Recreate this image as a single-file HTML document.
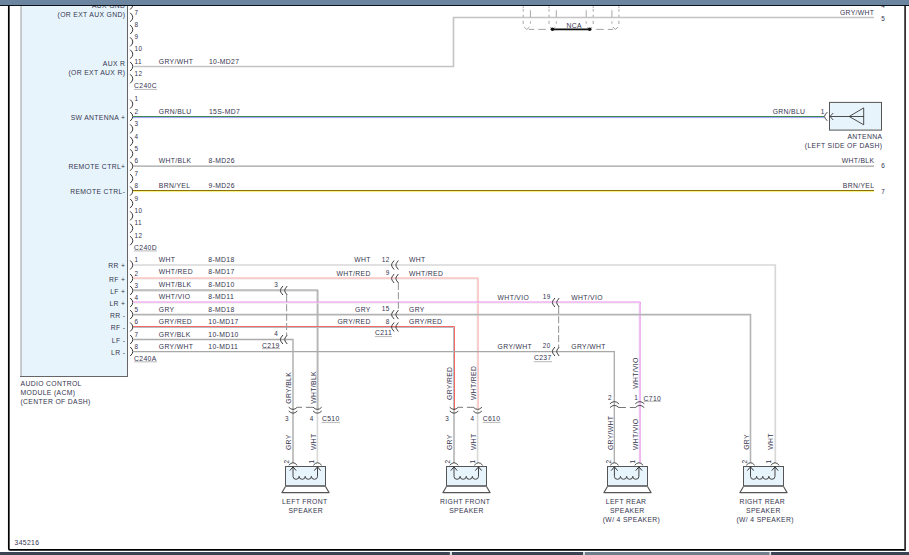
<!DOCTYPE html>
<html><head><meta charset="utf-8"><style>
html,body{margin:0;padding:0;background:#fff;width:909px;height:555px;overflow:hidden}
svg{display:block;position:absolute;left:0;top:0}
text{font-family:"Liberation Sans",sans-serif;fill:#34344e;letter-spacing:0.4px}
</style></head><body>
<svg width="909" height="555" viewBox="0 0 909 555">
<rect x="0" y="0" width="909" height="555" fill="#fff"/>
<rect x="21" y="-10" width="106.5" height="386.5" fill="#e8f4fc" stroke="none"/>
<line x1="21" y1="-10" x2="21" y2="376.5" stroke="#9a9a9a" stroke-width="1" />
<line x1="127.5" y1="-10" x2="127.5" y2="376.5" stroke="#666" stroke-width="1" />
<line x1="20" y1="376.5" x2="128" y2="376.5" stroke="#666" stroke-width="1" />
<path d="M130.2 0.5 L132.2 2.8 Q133.4 5.0 132.2 7.2 L130.2 9.5" stroke="#383838" stroke-width="1.0" fill="none" />
<text transform="translate(134.5 2.2) scale(0.873 1)" text-anchor="start" font-size="7.3" >6</text>
<path d="M130.2 12.799999999999997 L132.2 15.099999999999998 Q133.4 17.299999999999997 132.2 19.499999999999996 L130.2 21.799999999999997" stroke="#383838" stroke-width="1.0" fill="none" />
<text transform="translate(134.5 14.499999999999996) scale(0.873 1)" text-anchor="start" font-size="7.3" >7</text>
<path d="M130.2 25.099999999999994 L132.2 27.399999999999995 Q133.4 29.599999999999994 132.2 31.799999999999994 L130.2 34.099999999999994" stroke="#383838" stroke-width="1.0" fill="none" />
<text transform="translate(134.5 26.799999999999994) scale(0.873 1)" text-anchor="start" font-size="7.3" >8</text>
<path d="M130.2 37.4 L132.2 39.699999999999996 Q133.4 41.9 132.2 44.1 L130.2 46.4" stroke="#383838" stroke-width="1.0" fill="none" />
<text transform="translate(134.5 39.1) scale(0.873 1)" text-anchor="start" font-size="7.3" >9</text>
<path d="M130.2 49.7 L132.2 52.0 Q133.4 54.2 132.2 56.400000000000006 L130.2 58.7" stroke="#383838" stroke-width="1.0" fill="none" />
<text transform="translate(134.5 51.400000000000006) scale(0.873 1)" text-anchor="start" font-size="7.3" >10</text>
<path d="M130.2 62.0 L132.2 64.3 Q133.4 66.5 132.2 68.7 L130.2 71.0" stroke="#383838" stroke-width="1.0" fill="none" />
<text transform="translate(134.5 63.7) scale(0.873 1)" text-anchor="start" font-size="7.3" >11</text>
<path d="M130.2 74.3 L132.2 76.6 Q133.4 78.8 132.2 81.0 L130.2 83.3" stroke="#383838" stroke-width="1.0" fill="none" />
<text transform="translate(134.5 76.0) scale(0.873 1)" text-anchor="start" font-size="7.3" >12</text>
<path d="M130.2 99.58 L132.2 101.88 Q133.4 104.08 132.2 106.28 L130.2 108.58" stroke="#383838" stroke-width="1.0" fill="none" />
<text transform="translate(134.5 101.28) scale(0.873 1)" text-anchor="start" font-size="7.3" >1</text>
<path d="M130.2 112.0 L132.2 114.3 Q133.4 116.5 132.2 118.7 L130.2 121.0" stroke="#383838" stroke-width="1.0" fill="none" />
<text transform="translate(134.5 113.7) scale(0.873 1)" text-anchor="start" font-size="7.3" >2</text>
<path d="M130.2 124.41999999999999 L132.2 126.71999999999998 Q133.4 128.92 132.2 131.11999999999998 L130.2 133.42" stroke="#383838" stroke-width="1.0" fill="none" />
<text transform="translate(134.5 126.11999999999999) scale(0.873 1)" text-anchor="start" font-size="7.3" >3</text>
<path d="M130.2 136.84 L132.2 139.14000000000001 Q133.4 141.34 132.2 143.54 L130.2 145.84" stroke="#383838" stroke-width="1.0" fill="none" />
<text transform="translate(134.5 138.54) scale(0.873 1)" text-anchor="start" font-size="7.3" >4</text>
<path d="M130.2 149.26 L132.2 151.56 Q133.4 153.76 132.2 155.95999999999998 L130.2 158.26" stroke="#383838" stroke-width="1.0" fill="none" />
<text transform="translate(134.5 150.95999999999998) scale(0.873 1)" text-anchor="start" font-size="7.3" >5</text>
<path d="M130.2 161.68 L132.2 163.98000000000002 Q133.4 166.18 132.2 168.38 L130.2 170.68" stroke="#383838" stroke-width="1.0" fill="none" />
<text transform="translate(134.5 163.38) scale(0.873 1)" text-anchor="start" font-size="7.3" >6</text>
<path d="M130.2 174.1 L132.2 176.4 Q133.4 178.6 132.2 180.79999999999998 L130.2 183.1" stroke="#383838" stroke-width="1.0" fill="none" />
<text transform="translate(134.5 175.79999999999998) scale(0.873 1)" text-anchor="start" font-size="7.3" >7</text>
<path d="M130.2 186.51999999999998 L132.2 188.82 Q133.4 191.01999999999998 132.2 193.21999999999997 L130.2 195.51999999999998" stroke="#383838" stroke-width="1.0" fill="none" />
<text transform="translate(134.5 188.21999999999997) scale(0.873 1)" text-anchor="start" font-size="7.3" >8</text>
<path d="M130.2 198.94 L132.2 201.24 Q133.4 203.44 132.2 205.64 L130.2 207.94" stroke="#383838" stroke-width="1.0" fill="none" />
<text transform="translate(134.5 200.64) scale(0.873 1)" text-anchor="start" font-size="7.3" >9</text>
<path d="M130.2 211.36 L132.2 213.66000000000003 Q133.4 215.86 132.2 218.06 L130.2 220.36" stroke="#383838" stroke-width="1.0" fill="none" />
<text transform="translate(134.5 213.06) scale(0.873 1)" text-anchor="start" font-size="7.3" >10</text>
<path d="M130.2 223.78 L132.2 226.08 Q133.4 228.28 132.2 230.48 L130.2 232.78" stroke="#383838" stroke-width="1.0" fill="none" />
<text transform="translate(134.5 225.48) scale(0.873 1)" text-anchor="start" font-size="7.3" >11</text>
<path d="M130.2 236.2 L132.2 238.5 Q133.4 240.7 132.2 242.89999999999998 L130.2 245.2" stroke="#383838" stroke-width="1.0" fill="none" />
<text transform="translate(134.5 237.89999999999998) scale(0.873 1)" text-anchor="start" font-size="7.3" >12</text>
<path d="M130.2 260.5 L132.2 262.8 Q133.4 265 132.2 267.2 L130.2 269.5" stroke="#383838" stroke-width="1.0" fill="none" />
<text transform="translate(134.5 262.2) scale(0.873 1)" text-anchor="start" font-size="7.3" >1</text>
<path d="M130.2 274.0 L132.2 276.3 Q133.4 278.5 132.2 280.7 L130.2 283.0" stroke="#383838" stroke-width="1.0" fill="none" />
<text transform="translate(134.5 275.7) scale(0.873 1)" text-anchor="start" font-size="7.3" >2</text>
<path d="M130.2 286.0 L132.2 288.3 Q133.4 290.5 132.2 292.7 L130.2 295.0" stroke="#383838" stroke-width="1.0" fill="none" />
<text transform="translate(134.5 287.7) scale(0.873 1)" text-anchor="start" font-size="7.3" >3</text>
<path d="M130.2 298.0 L132.2 300.3 Q133.4 302.5 132.2 304.7 L130.2 307.0" stroke="#383838" stroke-width="1.0" fill="none" />
<text transform="translate(134.5 299.7) scale(0.873 1)" text-anchor="start" font-size="7.3" >4</text>
<path d="M130.2 310.1 L132.2 312.40000000000003 Q133.4 314.6 132.2 316.8 L130.2 319.1" stroke="#383838" stroke-width="1.0" fill="none" />
<text transform="translate(134.5 311.8) scale(0.873 1)" text-anchor="start" font-size="7.3" >5</text>
<path d="M130.2 322.5 L132.2 324.8 Q133.4 327 132.2 329.2 L130.2 331.5" stroke="#383838" stroke-width="1.0" fill="none" />
<text transform="translate(134.5 324.2) scale(0.873 1)" text-anchor="start" font-size="7.3" >6</text>
<path d="M130.2 335.0 L132.2 337.3 Q133.4 339.5 132.2 341.7 L130.2 344.0" stroke="#383838" stroke-width="1.0" fill="none" />
<text transform="translate(134.5 336.7) scale(0.873 1)" text-anchor="start" font-size="7.3" >7</text>
<path d="M130.2 347.0 L132.2 349.3 Q133.4 351.5 132.2 353.7 L130.2 356.0" stroke="#383838" stroke-width="1.0" fill="none" />
<text transform="translate(134.5 348.7) scale(0.873 1)" text-anchor="start" font-size="7.3" >8</text>
<text transform="translate(134 88.4) scale(0.873 1)" text-anchor="start" font-size="7.8" >C240C</text>
<line x1="134" y1="89.4" x2="157" y2="89.4" stroke="#9a9a9a" stroke-width="0.7" />
<text transform="translate(134 249.9) scale(0.873 1)" text-anchor="start" font-size="7.8" >C240D</text>
<line x1="134" y1="250.9" x2="157" y2="250.9" stroke="#9a9a9a" stroke-width="0.7" />
<text transform="translate(134 360.7) scale(0.873 1)" text-anchor="start" font-size="7.8" >C240A</text>
<line x1="134" y1="361.8" x2="157" y2="361.8" stroke="#9a9a9a" stroke-width="0.7" />
<text transform="translate(125.35 7.9) scale(0.873 1)" text-anchor="end" font-size="7.8" >AUX GND</text>
<text transform="translate(125.35 16.5) scale(0.873 1)" text-anchor="end" font-size="7.8" >(OR EXT AUX GND)</text>
<text transform="translate(125.35 66.0) scale(0.873 1)" text-anchor="end" font-size="7.8" >AUX R</text>
<text transform="translate(125.35 75.2) scale(0.873 1)" text-anchor="end" font-size="7.8" >(OR EXT AUX R)</text>
<text transform="translate(125.35 120.2) scale(0.873 1)" text-anchor="end" font-size="7.8" >SW ANTENNA +</text>
<text transform="translate(125.35 169.4) scale(0.873 1)" text-anchor="end" font-size="7.8" >REMOTE CTRL+</text>
<text transform="translate(125.35 194.0) scale(0.873 1)" text-anchor="end" font-size="7.8" >REMOTE CTRL-</text>
<text transform="translate(125.35 268.3) scale(0.873 1)" text-anchor="end" font-size="7.8" >RR +</text>
<text transform="translate(125.35 281.8) scale(0.873 1)" text-anchor="end" font-size="7.8" >RF +</text>
<text transform="translate(125.35 293.8) scale(0.873 1)" text-anchor="end" font-size="7.8" >LF +</text>
<text transform="translate(125.35 305.8) scale(0.873 1)" text-anchor="end" font-size="7.8" >LR +</text>
<text transform="translate(125.35 317.90000000000003) scale(0.873 1)" text-anchor="end" font-size="7.8" >RR -</text>
<text transform="translate(125.35 330.3) scale(0.873 1)" text-anchor="end" font-size="7.8" >RF -</text>
<text transform="translate(125.35 342.8) scale(0.873 1)" text-anchor="end" font-size="7.8" >LF -</text>
<text transform="translate(125.35 354.8) scale(0.873 1)" text-anchor="end" font-size="7.8" >LR -</text>
<text transform="translate(20.5 386.3) scale(0.873 1)" text-anchor="start" font-size="7.8" >AUDIO CONTROL</text>
<text transform="translate(20.5 395.2) scale(0.873 1)" text-anchor="start" font-size="7.8" >MODULE (ACM)</text>
<text transform="translate(20.5 404.1) scale(0.873 1)" text-anchor="start" font-size="7.8" >(CENTER OF DASH)</text>
<text transform="translate(14.5 545.2) scale(0.873 1)" text-anchor="start" font-size="7.8" >345216</text>
<path d="M133 66.5 H453.5 V17.5 H874" stroke="#c4c4c4" stroke-width="1.6" fill="none"/>
<text transform="translate(158.8 63.6) scale(0.873 1)" text-anchor="start" font-size="7.8" >GRY/WHT</text>
<text transform="translate(208.9 63.6) scale(0.873 1)" text-anchor="start" font-size="7.8" >10-MD27</text>
<text transform="translate(874.35 14.6) scale(0.873 1)" text-anchor="end" font-size="7.8" >GRY/WHT</text>
<text transform="translate(881.3 21.0) scale(0.873 1)" text-anchor="start" font-size="7.3" >5</text>
<text transform="translate(881.3 7.7) scale(0.873 1)" text-anchor="start" font-size="7.3" >4</text>
<line x1="133" y1="116.5" x2="824" y2="116.5" stroke="#3a8a52" stroke-width="1.2" />
<line x1="133" y1="117.6" x2="824" y2="117.6" stroke="#9d9df2" stroke-width="1.0" />
<text transform="translate(158.8 113.6) scale(0.873 1)" text-anchor="start" font-size="7.8" >GRN/BLU</text>
<text transform="translate(208.9 113.6) scale(0.873 1)" text-anchor="start" font-size="7.8" >15S-MD7</text>
<text transform="translate(772.7 113.6) scale(0.873 1)" text-anchor="start" font-size="7.8" >GRN/BLU</text>
<text transform="translate(820.8 113.8) scale(0.873 1)" text-anchor="start" font-size="7.3" >1</text>
<path d="M827.4 112.1 L825 114.9 Q824.2 116.5 825 118.1 L827.4 120.9" stroke="#383838" stroke-width="0.9" fill="none" />
<rect x="829.5" y="102.4" width="52" height="27.7" fill="#e8f4fc" stroke="#555" stroke-width="1"/>
<line x1="830" y1="116.5" x2="864" y2="116.5" stroke="#3a3a3a" stroke-width="0.9" />
<path d="M833.2 113.0 L830.0 116.5 L833.2 120.0" stroke="#3a3a3a" stroke-width="0.9" fill="none" />
<path d="M863.7 107.9 L849.2 116.5 L863.7 124.8 Z" stroke="#3a3a3a" stroke-width="0.9" fill="none" />
<text transform="translate(882.35 139.2) scale(0.873 1)" text-anchor="end" font-size="7.8" >ANTENNA</text>
<text transform="translate(882.35 148.3) scale(0.873 1)" text-anchor="end" font-size="7.8" >(LEFT SIDE OF DASH)</text>
<line x1="133" y1="166.2" x2="874" y2="166.2" stroke="#a2a2a2" stroke-width="1.3" />
<text transform="translate(158.8 163.3) scale(0.873 1)" text-anchor="start" font-size="7.8" >WHT/BLK</text>
<text transform="translate(208.5 163.3) scale(0.873 1)" text-anchor="start" font-size="7.8" >8-MD26</text>
<text transform="translate(874.35 163.0) scale(0.873 1)" text-anchor="end" font-size="7.8" >WHT/BLK</text>
<text transform="translate(881.3 168.4) scale(0.873 1)" text-anchor="start" font-size="7.3" >6</text>
<line x1="133" y1="190.5" x2="874" y2="190.5" stroke="#8a7010" stroke-width="1.2" />
<line x1="133" y1="191.6" x2="874" y2="191.6" stroke="#f8f070" stroke-width="1.0" />
<text transform="translate(158.8 188.0) scale(0.873 1)" text-anchor="start" font-size="7.8" >BRN/YEL</text>
<text transform="translate(208.5 188.0) scale(0.873 1)" text-anchor="start" font-size="7.8" >9-MD26</text>
<text transform="translate(874.35 188.0) scale(0.873 1)" text-anchor="end" font-size="7.8" >BRN/YEL</text>
<text transform="translate(881.3 194.0) scale(0.873 1)" text-anchor="start" font-size="7.3" >7</text>
<path d="M133 265 H775.3 V463" stroke="#d8d8d8" stroke-width="1.7" fill="none"/>
<path d="M133 279.0 H477.1 V410.5" stroke="#e6e6e6" stroke-width="1.0" fill="none"/>
<path d="M133 278.0 H478.1 V410.5" stroke="#ffa4a4" stroke-width="1.0" fill="none"/>
<path d="M477.6 410.5 V463" stroke="#d8d8d8" stroke-width="1.6" fill="none"/>
<path d="M133 291.0 H316.9 V410.5" stroke="#d2d2d2" stroke-width="1.0" fill="none"/>
<path d="M133 290.0 H317.9 V410.5" stroke="#959595" stroke-width="1.0" fill="none"/>
<path d="M317.4 410.5 V463" stroke="#d8d8d8" stroke-width="1.6" fill="none"/>
<path d="M133 303.0 H639.3 V463" stroke="#e6e9e6" stroke-width="1.0" fill="none"/>
<path d="M133 302.0 H640.3 V463" stroke="#f08cf0" stroke-width="1.0" fill="none"/>
<path d="M639.8 303.5 V463" stroke="#efbff3" stroke-width="1.9" fill="none"/>
<path d="M133 314.6 H750.5 V463" stroke="#b4b4b4" stroke-width="1.6" fill="none"/>
<path d="M133 327.5 H453.5 V410.5" stroke="#b8bcbc" stroke-width="1.0" fill="none"/>
<path d="M133 326.5 H454.5 V410.5" stroke="#f46868" stroke-width="1.0" fill="none"/>
<path d="M454.0 410.5 V463" stroke="#b4b4b4" stroke-width="1.6" fill="none"/>
<path d="M133 339.5 H293.0 V410.5" stroke="#acacac" stroke-width="1.4" fill="none"/>
<path d="M293.0 410.5 V463" stroke="#b4b4b4" stroke-width="1.6" fill="none"/>
<path d="M133 351.6 H614.3 V463" stroke="#a8a8a8" stroke-width="1.25" fill="none"/>
<text transform="translate(158.8 262.0) scale(0.873 1)" text-anchor="start" font-size="7.8" >WHT</text>
<text transform="translate(208.3 262.0) scale(0.873 1)" text-anchor="start" font-size="7.8" >8-MD18</text>
<text transform="translate(158.8 274.45) scale(0.873 1)" text-anchor="start" font-size="7.8" >WHT/RED</text>
<text transform="translate(208.3 274.45) scale(0.873 1)" text-anchor="start" font-size="7.8" >8-MD17</text>
<text transform="translate(158.8 286.9) scale(0.873 1)" text-anchor="start" font-size="7.8" >WHT/BLK</text>
<text transform="translate(208.3 286.9) scale(0.873 1)" text-anchor="start" font-size="7.8" >8-MD10</text>
<text transform="translate(158.8 299.35) scale(0.873 1)" text-anchor="start" font-size="7.8" >WHT/VIO</text>
<text transform="translate(208.3 299.35) scale(0.873 1)" text-anchor="start" font-size="7.8" >8-MD11</text>
<text transform="translate(158.8 311.8) scale(0.873 1)" text-anchor="start" font-size="7.8" >GRY</text>
<text transform="translate(208.3 311.8) scale(0.873 1)" text-anchor="start" font-size="7.8" >8-MD18</text>
<text transform="translate(158.8 324.25) scale(0.873 1)" text-anchor="start" font-size="7.8" >GRY/RED</text>
<text transform="translate(208.3 324.25) scale(0.873 1)" text-anchor="start" font-size="7.8" >10-MD17</text>
<text transform="translate(158.8 336.7) scale(0.873 1)" text-anchor="start" font-size="7.8" >GRY/BLK</text>
<text transform="translate(208.3 336.7) scale(0.873 1)" text-anchor="start" font-size="7.8" >10-MD10</text>
<text transform="translate(158.8 349.15) scale(0.873 1)" text-anchor="start" font-size="7.8" >GRY/WHT</text>
<text transform="translate(208.3 349.15) scale(0.873 1)" text-anchor="start" font-size="7.8" >10-MD11</text>
<path d="M394.09999999999997 260.5 L391.99999999999994 263.4 Q391.2 265 391.99999999999994 266.6 L394.09999999999997 269.5" stroke="#383838" stroke-width="0.95" fill="none" />
<path d="M398.4 260.5 L396.29999999999995 263.4 Q395.5 265 396.29999999999995 266.6 L398.4 269.5" stroke="#383838" stroke-width="0.95" fill="none" />
<path d="M394.09999999999997 274.0 L391.99999999999994 276.9 Q391.2 278.5 391.99999999999994 280.1 L394.09999999999997 283.0" stroke="#383838" stroke-width="0.95" fill="none" />
<path d="M398.4 274.0 L396.29999999999995 276.9 Q395.5 278.5 396.29999999999995 280.1 L398.4 283.0" stroke="#383838" stroke-width="0.95" fill="none" />
<path d="M394.09999999999997 310.1 L391.99999999999994 313.0 Q391.2 314.6 391.99999999999994 316.20000000000005 L394.09999999999997 319.1" stroke="#383838" stroke-width="0.95" fill="none" />
<path d="M398.4 310.1 L396.29999999999995 313.0 Q395.5 314.6 396.29999999999995 316.20000000000005 L398.4 319.1" stroke="#383838" stroke-width="0.95" fill="none" />
<path d="M394.09999999999997 322.5 L391.99999999999994 325.4 Q391.2 327 391.99999999999994 328.6 L394.09999999999997 331.5" stroke="#383838" stroke-width="0.95" fill="none" />
<path d="M398.4 322.5 L396.29999999999995 325.4 Q395.5 327 396.29999999999995 328.6 L398.4 331.5" stroke="#383838" stroke-width="0.95" fill="none" />
<line x1="398.4" y1="282.9" x2="398.4" y2="310.20000000000005" stroke="#9c9c9c" stroke-width="1.1" stroke-dasharray="7 2.4"/>
<text transform="translate(370.75 262.2) scale(0.873 1)" text-anchor="end" font-size="7.8" >WHT</text>
<text transform="translate(389.55 261.6) scale(0.873 1)" text-anchor="end" font-size="7.3" >12</text>
<text transform="translate(409 262.2) scale(0.873 1)" text-anchor="start" font-size="7.8" >WHT</text>
<text transform="translate(370.75 275.7) scale(0.873 1)" text-anchor="end" font-size="7.8" >WHT/RED</text>
<text transform="translate(389.55 275.1) scale(0.873 1)" text-anchor="end" font-size="7.3" >9</text>
<text transform="translate(409 275.7) scale(0.873 1)" text-anchor="start" font-size="7.8" >WHT/RED</text>
<text transform="translate(370.75 311.8) scale(0.873 1)" text-anchor="end" font-size="7.8" >GRY</text>
<text transform="translate(389.55 311.20000000000005) scale(0.873 1)" text-anchor="end" font-size="7.3" >15</text>
<text transform="translate(409 311.8) scale(0.873 1)" text-anchor="start" font-size="7.8" >GRY</text>
<text transform="translate(370.75 324.2) scale(0.873 1)" text-anchor="end" font-size="7.8" >GRY/RED</text>
<text transform="translate(389.55 323.6) scale(0.873 1)" text-anchor="end" font-size="7.3" >8</text>
<text transform="translate(409 324.2) scale(0.873 1)" text-anchor="start" font-size="7.8" >GRY/RED</text>
<text transform="translate(374.9 335.2) scale(0.873 1)" text-anchor="start" font-size="7.8" >C211</text>
<line x1="374.9" y1="336.6" x2="392" y2="336.6" stroke="#9a9a9a" stroke-width="0.7" />
<path d="M282.9 286.0 L280.79999999999995 288.9 Q280.0 290.5 280.79999999999995 292.1 L282.9 295.0" stroke="#383838" stroke-width="0.95" fill="none" />
<path d="M287.2 286.0 L285.09999999999997 288.9 Q284.3 290.5 285.09999999999997 292.1 L287.2 295.0" stroke="#383838" stroke-width="0.95" fill="none" />
<path d="M282.9 335.0 L280.79999999999995 337.9 Q280.0 339.5 280.79999999999995 341.1 L282.9 344.0" stroke="#383838" stroke-width="0.95" fill="none" />
<path d="M287.2 335.0 L285.09999999999997 337.9 Q284.3 339.5 285.09999999999997 341.1 L287.2 344.0" stroke="#383838" stroke-width="0.95" fill="none" />
<line x1="286.6" y1="294.9" x2="286.6" y2="335.1" stroke="#9c9c9c" stroke-width="1.1" stroke-dasharray="7 2.4"/>
<text transform="translate(278.05 286.7) scale(0.873 1)" text-anchor="end" font-size="7.3" >3</text>
<text transform="translate(278.05 335.7) scale(0.873 1)" text-anchor="end" font-size="7.3" >4</text>
<text transform="translate(262 347.8) scale(0.873 1)" text-anchor="start" font-size="7.8" >C219</text>
<line x1="262" y1="348.6" x2="280" y2="348.6" stroke="#9a9a9a" stroke-width="0.7" />
<path d="M554.9000000000001 298.0 L552.8000000000001 300.9 Q552.0000000000001 302.5 552.8000000000001 304.1 L554.9000000000001 307.0" stroke="#383838" stroke-width="0.95" fill="none" />
<path d="M559.2 298.0 L557.1 300.9 Q556.3000000000001 302.5 557.1 304.1 L559.2 307.0" stroke="#383838" stroke-width="0.95" fill="none" />
<path d="M554.9000000000001 347.0 L552.8000000000001 349.9 Q552.0000000000001 351.5 552.8000000000001 353.1 L554.9000000000001 356.0" stroke="#383838" stroke-width="0.95" fill="none" />
<path d="M559.2 347.0 L557.1 349.9 Q556.3000000000001 351.5 557.1 353.1 L559.2 356.0" stroke="#383838" stroke-width="0.95" fill="none" />
<line x1="558.6" y1="306.9" x2="558.6" y2="347.1" stroke="#9c9c9c" stroke-width="1.1" stroke-dasharray="7 2.4"/>
<text transform="translate(497.6 299.7) scale(0.873 1)" text-anchor="start" font-size="7.8" >WHT/VIO</text>
<text transform="translate(550.55 299.3) scale(0.873 1)" text-anchor="end" font-size="7.3" >19</text>
<text transform="translate(571.3 299.7) scale(0.873 1)" text-anchor="start" font-size="7.8" >WHT/VIO</text>
<text transform="translate(497.6 348.7) scale(0.873 1)" text-anchor="start" font-size="7.8" >GRY/WHT</text>
<text transform="translate(550.55 348.3) scale(0.873 1)" text-anchor="end" font-size="7.3" >20</text>
<text transform="translate(571.3 348.7) scale(0.873 1)" text-anchor="start" font-size="7.8" >GRY/WHT</text>
<text transform="translate(533.9 360.3) scale(0.873 1)" text-anchor="start" font-size="7.8" >C237</text>
<line x1="533.9" y1="361.7" x2="552" y2="361.7" stroke="#9a9a9a" stroke-width="0.7" />
<path d="M288.7 407.2 Q293.0 411.59999999999997 297.3 407.2" stroke="#383838" stroke-width="0.9" fill="none" />
<path d="M288.7 411.0 Q293.0 415.4 297.3 411.0" stroke="#383838" stroke-width="0.9" fill="none" />
<path d="M313.09999999999997 407.2 Q317.4 411.59999999999997 321.7 407.2" stroke="#383838" stroke-width="0.9" fill="none" />
<path d="M313.09999999999997 411.0 Q317.4 415.4 321.7 411.0" stroke="#383838" stroke-width="0.9" fill="none" />
<line x1="297.3" y1="407.3" x2="313.09999999999997" y2="407.3" stroke="#666" stroke-width="0.9" stroke-dasharray="4.7 3.9 9"/>
<text transform="translate(285 420.6) scale(0.873 1)" text-anchor="start" font-size="7.3" >3</text>
<text transform="translate(309.7 420.6) scale(0.873 1)" text-anchor="start" font-size="7.3" >4</text>
<text transform="translate(321.9 421.0) scale(0.873 1)" text-anchor="start" font-size="7.8" >C510</text>
<line x1="321.9" y1="422.4" x2="340" y2="422.4" stroke="#9a9a9a" stroke-width="0.7" />
<path d="M449.7 407.2 Q454.0 411.59999999999997 458.3 407.2" stroke="#383838" stroke-width="0.9" fill="none" />
<path d="M449.7 411.0 Q454.0 415.4 458.3 411.0" stroke="#383838" stroke-width="0.9" fill="none" />
<path d="M473.3 407.2 Q477.6 411.59999999999997 481.90000000000003 407.2" stroke="#383838" stroke-width="0.9" fill="none" />
<path d="M473.3 411.0 Q477.6 415.4 481.90000000000003 411.0" stroke="#383838" stroke-width="0.9" fill="none" />
<line x1="458.3" y1="407.3" x2="473.3" y2="407.3" stroke="#666" stroke-width="0.9" stroke-dasharray="4.7 3.9 9"/>
<text transform="translate(445.3 420.6) scale(0.873 1)" text-anchor="start" font-size="7.3" >3</text>
<text transform="translate(470.5 420.6) scale(0.873 1)" text-anchor="start" font-size="7.3" >4</text>
<text transform="translate(482.7 421.0) scale(0.873 1)" text-anchor="start" font-size="7.8" >C610</text>
<line x1="482.7" y1="422.4" x2="500.5" y2="422.4" stroke="#9a9a9a" stroke-width="0.7" />
<path d="M609.9 403.8 Q614.4 399.40000000000003 618.9 403.8" stroke="#383838" stroke-width="0.9" fill="none" />
<path d="M609.9 407.6 Q614.4 403.2 618.9 407.6" stroke="#383838" stroke-width="0.9" fill="none" />
<path d="M635.3 403.8 Q639.8 399.40000000000003 644.3 403.8" stroke="#383838" stroke-width="0.9" fill="none" />
<path d="M635.3 407.6 Q639.8 403.2 644.3 407.6" stroke="#383838" stroke-width="0.9" fill="none" />
<line x1="618.9" y1="407.5" x2="635.3" y2="407.5" stroke="#666" stroke-width="0.9" stroke-dasharray="7 4 9"/>
<text transform="translate(607.9 399.8) scale(0.873 1)" text-anchor="start" font-size="7.3" >2</text>
<text transform="translate(634.3 399.8) scale(0.873 1)" text-anchor="start" font-size="7.3" >1</text>
<text transform="translate(643.6 400.6) scale(0.873 1)" text-anchor="start" font-size="7.8" >C710</text>
<line x1="643.6" y1="401.3" x2="661" y2="401.3" stroke="#9a9a9a" stroke-width="0.7" />
<text x="0" y="0" font-size="7.8" transform="translate(291.0 403.7) rotate(-90) scale(0.873 1)">GRY/BLK</text>
<text x="0" y="0" font-size="7.8" transform="translate(315.5 403.7) rotate(-90) scale(0.873 1)">WHT/BLK</text>
<text x="0" y="0" font-size="7.8" transform="translate(291.0 450.1) rotate(-90) scale(0.873 1)">GRY</text>
<text x="0" y="0" font-size="7.8" transform="translate(315.5 450.1) rotate(-90) scale(0.873 1)">WHT</text>
<text x="0" y="0" font-size="7.8" transform="translate(452.0 400.0) rotate(-90) scale(0.873 1)">GRY/RED</text>
<text x="0" y="0" font-size="7.8" transform="translate(475.9 400.0) rotate(-90) scale(0.873 1)">WHT/RED</text>
<text x="0" y="0" font-size="7.8" transform="translate(452.0 450.1) rotate(-90) scale(0.873 1)">GRY</text>
<text x="0" y="0" font-size="7.8" transform="translate(475.9 450.1) rotate(-90) scale(0.873 1)">WHT</text>
<text x="0" y="0" font-size="7.8" transform="translate(637.8 388.8) rotate(-90) scale(0.873 1)">WHT/VIO</text>
<text x="0" y="0" font-size="7.8" transform="translate(612.6 450.1) rotate(-90) scale(0.873 1)">GRY/WHT</text>
<text x="0" y="0" font-size="7.8" transform="translate(637.8 450.1) rotate(-90) scale(0.873 1)">WHT/VIO</text>
<text x="0" y="0" font-size="7.8" transform="translate(748.8 449.8) rotate(-90) scale(0.873 1)">GRY</text>
<text x="0" y="0" font-size="7.8" transform="translate(773.4 449.8) rotate(-90) scale(0.873 1)">WHT</text>
<path d="M288.8 465.3 Q293.0 460.2 297.2 465.3" stroke="#383838" stroke-width="0.9" fill="none" />
<path d="M313.3 465.3 Q317.5 460.2 321.7 465.3" stroke="#383838" stroke-width="0.9" fill="none" />
<rect x="285.5" y="466.5" width="40" height="19.5" fill="#e8f4fc" stroke="#555" stroke-width="1"/>
<line x1="285.5" y1="486" x2="325.5" y2="486" stroke="#6a6a6a" stroke-width="1.6" />
<path d="M285.5 486.5 L281.9 492.6 L329.1 492.6 L325.5 486.5" stroke="#555" stroke-width="1.1" fill="none" stroke-linejoin="round"/>
<path d="M293.0 466.8 V476.3 A3.0625 3.0 0 0 0 299.125 476.3 A3.0625 3.0 0 0 0 305.25 476.3 A3.0625 3.0 0 0 0 311.375 476.3 A3.0625 3.0 0 0 0 317.5 476.3 V466.8" stroke="#444" stroke-width="1.0" fill="none" />
<path d="M289.8 470.6 L293.0 466.9 L296.2 470.6" stroke="#333" stroke-width="1.0" fill="none" />
<path d="M314.3 470.6 L317.5 466.9 L320.7 470.6" stroke="#333" stroke-width="1.0" fill="none" />
<text x="0" y="0" font-size="7.3" transform="translate(289.09999999999997 463.5) rotate(-90) scale(0.873 1)">2</text>
<text x="0" y="0" font-size="7.3" transform="translate(313.59999999999997 463.5) rotate(-90) scale(0.873 1)">1</text>
<text transform="translate(304.77 504.3) scale(0.873 1)" text-anchor="middle" font-size="7.8" >LEFT FRONT</text>
<text transform="translate(305.77 513.2) scale(0.873 1)" text-anchor="middle" font-size="7.8" >SPEAKER</text>
<path d="M449.8 465.3 Q454.0 460.2 458.2 465.3" stroke="#383838" stroke-width="0.9" fill="none" />
<path d="M474.3 465.3 Q478.5 460.2 482.7 465.3" stroke="#383838" stroke-width="0.9" fill="none" />
<rect x="446.5" y="466.5" width="40" height="19.5" fill="#e8f4fc" stroke="#555" stroke-width="1"/>
<line x1="446.5" y1="486" x2="486.5" y2="486" stroke="#6a6a6a" stroke-width="1.6" />
<path d="M446.5 486.5 L442.9 492.6 L490.1 492.6 L486.5 486.5" stroke="#555" stroke-width="1.1" fill="none" stroke-linejoin="round"/>
<path d="M454.0 466.8 V476.3 A3.0625 3.0 0 0 0 460.125 476.3 A3.0625 3.0 0 0 0 466.25 476.3 A3.0625 3.0 0 0 0 472.375 476.3 A3.0625 3.0 0 0 0 478.5 476.3 V466.8" stroke="#444" stroke-width="1.0" fill="none" />
<path d="M450.8 470.6 L454.0 466.9 L457.2 470.6" stroke="#333" stroke-width="1.0" fill="none" />
<path d="M475.3 470.6 L478.5 466.9 L481.7 470.6" stroke="#333" stroke-width="1.0" fill="none" />
<text x="0" y="0" font-size="7.3" transform="translate(450.09999999999997 463.5) rotate(-90) scale(0.873 1)">2</text>
<text x="0" y="0" font-size="7.3" transform="translate(474.59999999999997 463.5) rotate(-90) scale(0.873 1)">1</text>
<text transform="translate(465.17 504.3) scale(0.873 1)" text-anchor="middle" font-size="7.8" >RIGHT FRONT</text>
<text transform="translate(466.47 513.2) scale(0.873 1)" text-anchor="middle" font-size="7.8" >SPEAKER</text>
<path d="M610.1999999999999 465.3 Q614.4 460.2 618.6 465.3" stroke="#383838" stroke-width="0.9" fill="none" />
<path d="M634.6999999999999 465.3 Q638.9 460.2 643.1 465.3" stroke="#383838" stroke-width="0.9" fill="none" />
<rect x="607.5" y="466.5" width="40" height="19.5" fill="#e8f4fc" stroke="#555" stroke-width="1"/>
<line x1="607.5" y1="486" x2="647.5" y2="486" stroke="#6a6a6a" stroke-width="1.6" />
<path d="M607.5 486.5 L603.9 492.6 L651.1 492.6 L647.5 486.5" stroke="#555" stroke-width="1.1" fill="none" stroke-linejoin="round"/>
<path d="M614.4 466.8 V476.3 A3.0625 3.0 0 0 0 620.525 476.3 A3.0625 3.0 0 0 0 626.65 476.3 A3.0625 3.0 0 0 0 632.775 476.3 A3.0625 3.0 0 0 0 638.9 476.3 V466.8" stroke="#444" stroke-width="1.0" fill="none" />
<path d="M611.1999999999999 470.6 L614.4 466.9 L617.6 470.6" stroke="#333" stroke-width="1.0" fill="none" />
<path d="M635.6999999999999 470.6 L638.9 466.9 L642.1 470.6" stroke="#333" stroke-width="1.0" fill="none" />
<text x="0" y="0" font-size="7.3" transform="translate(610.5 463.5) rotate(-90) scale(0.873 1)">2</text>
<text x="0" y="0" font-size="7.3" transform="translate(635.0 463.5) rotate(-90) scale(0.873 1)">1</text>
<text transform="translate(626.07 504.3) scale(0.873 1)" text-anchor="middle" font-size="7.8" >LEFT REAR</text>
<text transform="translate(627.27 513.2) scale(0.873 1)" text-anchor="middle" font-size="7.8" >SPEAKER</text>
<text transform="translate(631.47 522.3) scale(0.873 1)" text-anchor="middle" font-size="7.8" >(W/ 4 SPEAKER)</text>
<path d="M746.3 465.3 Q750.5 460.2 754.7 465.3" stroke="#383838" stroke-width="0.9" fill="none" />
<path d="M770.8 465.3 Q775.0 460.2 779.2 465.3" stroke="#383838" stroke-width="0.9" fill="none" />
<rect x="743.5" y="466.5" width="40" height="19.5" fill="#e8f4fc" stroke="#555" stroke-width="1"/>
<line x1="743.5" y1="486" x2="783.5" y2="486" stroke="#6a6a6a" stroke-width="1.6" />
<path d="M743.5 486.5 L739.9 492.6 L787.1 492.6 L783.5 486.5" stroke="#555" stroke-width="1.1" fill="none" stroke-linejoin="round"/>
<path d="M750.5 466.8 V476.3 A3.0625 3.0 0 0 0 756.625 476.3 A3.0625 3.0 0 0 0 762.75 476.3 A3.0625 3.0 0 0 0 768.875 476.3 A3.0625 3.0 0 0 0 775.0 476.3 V466.8" stroke="#444" stroke-width="1.0" fill="none" />
<path d="M747.3 470.6 L750.5 466.9 L753.7 470.6" stroke="#333" stroke-width="1.0" fill="none" />
<path d="M771.8 470.6 L775.0 466.9 L778.2 470.6" stroke="#333" stroke-width="1.0" fill="none" />
<text x="0" y="0" font-size="7.3" transform="translate(746.6 463.5) rotate(-90) scale(0.873 1)">2</text>
<text x="0" y="0" font-size="7.3" transform="translate(771.1 463.5) rotate(-90) scale(0.873 1)">1</text>
<text transform="translate(762.27 504.3) scale(0.873 1)" text-anchor="middle" font-size="7.8" >RIGHT REAR</text>
<text transform="translate(763.37 513.2) scale(0.873 1)" text-anchor="middle" font-size="7.8" >SPEAKER</text>
<text transform="translate(765.17 522.3) scale(0.873 1)" text-anchor="middle" font-size="7.8" >(W/ 4 SPEAKER)</text>
<line x1="523.2" y1="6.2" x2="523.2" y2="8.0" stroke="#a8a8a8" stroke-width="1.0" />
<line x1="523.2" y1="8.9" x2="523.2" y2="11.6" stroke="#a8a8a8" stroke-width="1.0" />
<line x1="523.2" y1="14.8" x2="523.2" y2="17.0" stroke="#a8a8a8" stroke-width="1.0" />
<line x1="523.2" y1="20.8" x2="523.2" y2="24.0" stroke="#a8a8a8" stroke-width="1.0" />
<line x1="530.4" y1="10.2" x2="530.4" y2="17.2" stroke="#a8a8a8" stroke-width="1.0" />
<line x1="530.4" y1="21.3" x2="530.4" y2="23.7" stroke="#a8a8a8" stroke-width="1.0" />
<path d="M524.2 27.0 L526.8 29.5 L529.4 27.0" stroke="#999" stroke-width="0.9" fill="none" />
<line x1="549.0" y1="6.2" x2="549.0" y2="8.0" stroke="#a8a8a8" stroke-width="1.0" />
<line x1="549.0" y1="8.9" x2="549.0" y2="11.6" stroke="#a8a8a8" stroke-width="1.0" />
<line x1="549.0" y1="14.8" x2="549.0" y2="17.0" stroke="#a8a8a8" stroke-width="1.0" />
<line x1="549.0" y1="20.8" x2="549.0" y2="24.0" stroke="#a8a8a8" stroke-width="1.0" />
<line x1="556.3" y1="10.2" x2="556.3" y2="17.2" stroke="#a8a8a8" stroke-width="1.0" />
<line x1="556.3" y1="21.3" x2="556.3" y2="23.7" stroke="#a8a8a8" stroke-width="1.0" />
<path d="M550.0 27.0 L552.65 29.5 L555.3 27.0" stroke="#999" stroke-width="0.9" fill="none" />
<line x1="593.2" y1="6.2" x2="593.2" y2="8.0" stroke="#a8a8a8" stroke-width="1.0" />
<line x1="593.2" y1="8.9" x2="593.2" y2="11.6" stroke="#a8a8a8" stroke-width="1.0" />
<line x1="593.2" y1="14.8" x2="593.2" y2="17.0" stroke="#a8a8a8" stroke-width="1.0" />
<line x1="593.2" y1="20.8" x2="593.2" y2="24.0" stroke="#a8a8a8" stroke-width="1.0" />
<line x1="586.2" y1="10.2" x2="586.2" y2="17.2" stroke="#a8a8a8" stroke-width="1.0" />
<line x1="586.2" y1="21.3" x2="586.2" y2="23.7" stroke="#a8a8a8" stroke-width="1.0" />
<path d="M587.2 27.0 L589.7 29.5 L592.2 27.0" stroke="#999" stroke-width="0.9" fill="none" />
<line x1="618.9" y1="6.2" x2="618.9" y2="8.0" stroke="#a8a8a8" stroke-width="1.0" />
<line x1="618.9" y1="8.9" x2="618.9" y2="11.6" stroke="#a8a8a8" stroke-width="1.0" />
<line x1="618.9" y1="14.8" x2="618.9" y2="17.0" stroke="#a8a8a8" stroke-width="1.0" />
<line x1="618.9" y1="20.8" x2="618.9" y2="24.0" stroke="#a8a8a8" stroke-width="1.0" />
<line x1="611.9" y1="10.2" x2="611.9" y2="17.2" stroke="#a8a8a8" stroke-width="1.0" />
<line x1="611.9" y1="21.3" x2="611.9" y2="23.7" stroke="#a8a8a8" stroke-width="1.0" />
<path d="M612.9 27.0 L615.4 29.5 L617.9 27.0" stroke="#999" stroke-width="0.9" fill="none" />
<line x1="528.8" y1="29.4" x2="534.2" y2="29.4" stroke="#999" stroke-width="0.9" />
<line x1="538.3" y1="29.4" x2="545.8" y2="29.4" stroke="#999" stroke-width="0.9" />
<line x1="596.2" y1="29.4" x2="603.8" y2="29.4" stroke="#999" stroke-width="0.9" />
<line x1="607.8" y1="29.4" x2="613.2" y2="29.4" stroke="#999" stroke-width="0.9" />
<line x1="552.4" y1="29.4" x2="589.7" y2="29.4" stroke="#111" stroke-width="1.8" />
<circle cx="552.4" cy="29.3" r="1.8" fill="#111"/><circle cx="589.7" cy="29.3" r="1.8" fill="#111"/>
<text transform="translate(574.17 27.8) scale(0.873 1)" text-anchor="middle" font-size="7.8" >NCA</text>
<!-- frame -->
<path d="M905.1 549.9 H10 Q8.8 549.9 8.8 548.7 V0" fill="none" stroke="#000" stroke-width="1.7"/>
<line x1="905.1" y1="0" x2="905.1" y2="550.7" stroke="#262626" stroke-width="1.7"/>
<rect x="0" y="0" width="909" height="5" fill="#6b85a1"/>
<rect x="0" y="5" width="909" height="1" fill="#0c1219"/>
<rect x="0" y="552" width="909" height="3" fill="#3a4455"/>
<rect x="449.8" y="552" width="2.2" height="3" fill="#d4d8dc"/>
<rect x="583" y="552" width="2" height="3" fill="#d4d8dc"/>
<rect x="585" y="552" width="184.3" height="3" fill="#6e7e8c"/>
<rect x="769.3" y="552" width="1.8" height="3" fill="#d4d8dc"/>
</svg>
</body></html>
